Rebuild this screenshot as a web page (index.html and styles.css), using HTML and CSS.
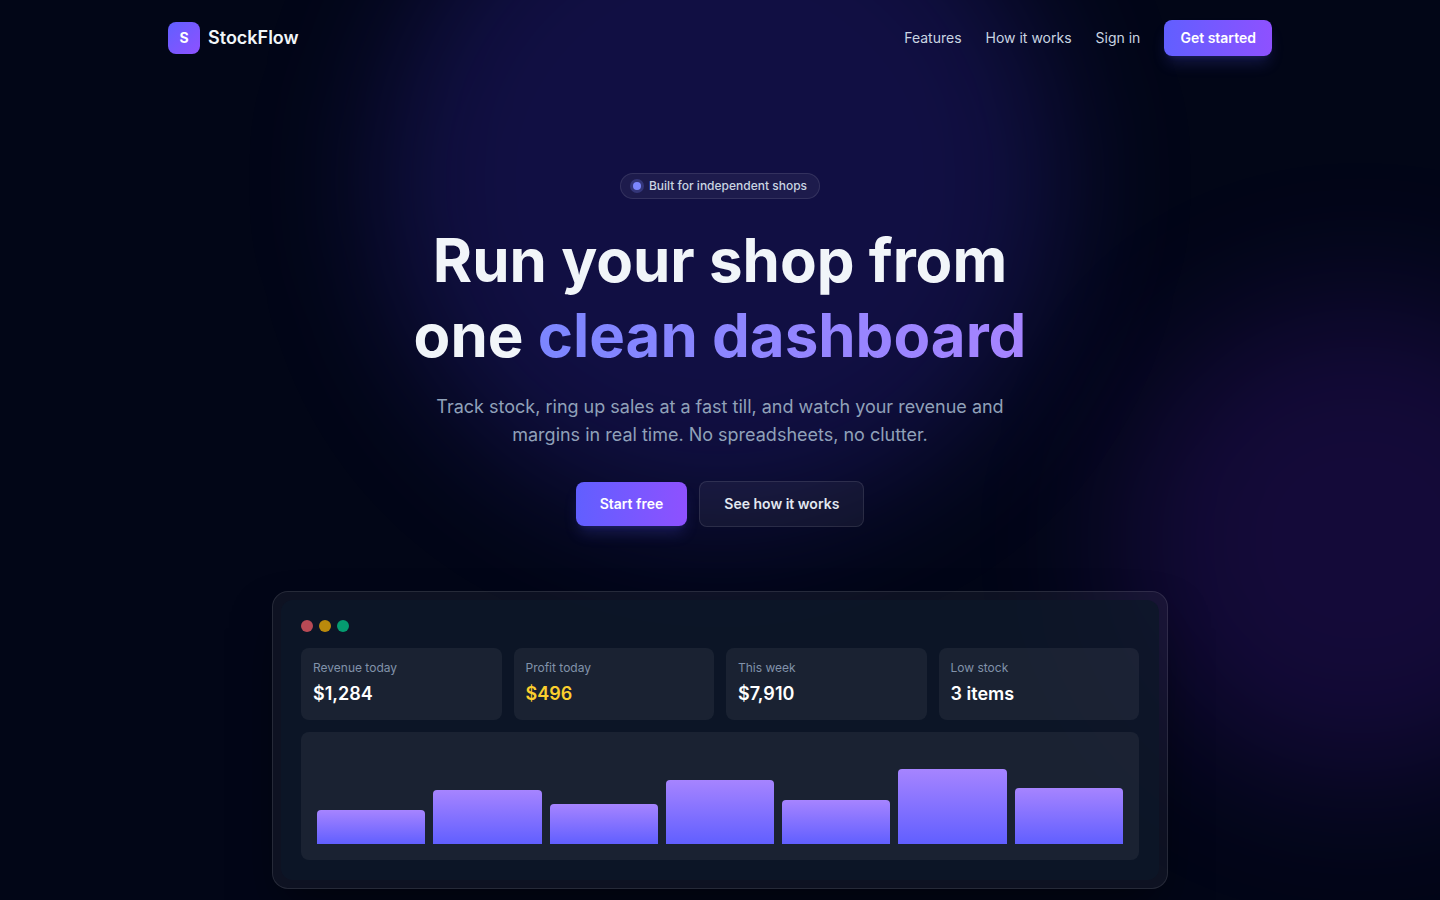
FILE: index.html
```html
<!DOCTYPE html>
<html lang="en">

<head>
    <meta charset="UTF-8">
    <meta name="viewport" content="width=device-width, initial-scale=1.0">
    <title>StockFlow</title>
    <link rel="stylesheet" href="styles.css">
</head>

<body>
    <div class="page">
        <div class="glow glow-indigo"></div>
        <div class="glow glow-violet"></div>

        <header class="header">
            <a class="brand" href="#">
                <span class="brand-mark">S</span>
                <span>StockFlow</span>
            </a>
            <nav class="nav">
                <a href="#features">Features</a>
                <a href="#how">How it works</a>
                <a href="#signin">Sign in</a>
                <a class="btn btn-primary btn-small" href="#start">Get started</a>
            </nav>
        </header>

        <main class="hero">
            <span class="badge"><span class="badge-dot"></span>Built for independent shops</span>
            <h1>Run your shop from<br>one <span class="gradient-text">clean dashboard</span></h1>
            <p class="lead">Track stock, ring up sales at a fast till, and watch your revenue and margins in real time. No spreadsheets, no clutter.</p>
            <div class="actions">
                <a class="btn btn-primary" href="#start">Start free</a>
                <a class="btn btn-outline" href="#how">See how it works</a>
            </div>

            <!-- Dashboard preview -->
            <div class="preview">
                <div class="preview-inner">
                    <div class="dots">
                        <span class="dot dot-red"></span>
                        <span class="dot dot-amber"></span>
                        <span class="dot dot-green"></span>
                    </div>
                    <div class="stats">
                        <div class="stat">
                            <div class="stat-label">Revenue today</div>
                            <div class="stat-value">$1,284</div>
                        </div>
                        <div class="stat">
                            <div class="stat-label">Profit today</div>
                            <div class="stat-value profit">$496</div>
                        </div>
                        <div class="stat">
                            <div class="stat-label">This week</div>
                            <div class="stat-value">$7,910</div>
                        </div>
                        <div class="stat">
                            <div class="stat-label">Low stock</div>
                            <div class="stat-value">3 items</div>
                        </div>
                    </div>
                    <div class="chart">
                        <div class="bar" style="height: 35%"></div>
                        <div class="bar" style="height: 56%"></div>
                        <div class="bar" style="height: 42%"></div>
                        <div class="bar" style="height: 67%"></div>
                        <div class="bar" style="height: 46%"></div>
                        <div class="bar" style="height: 78%"></div>
                        <div class="bar" style="height: 58%"></div>
                    </div>
                </div>
            </div>
        </main>
    </div>
</body>

</html>
```
FILE: styles.css
```css
* {
    box-sizing: border-box;
}

body {
    margin: 0;
    font-family: Inter, sans-serif;
    font-size: 14px;
    line-height: 20px;
    background-color: #020617;
    color: #f1f5f9;
}

a {
    color: inherit;
    text-decoration: none;
}

.page {
    position: relative;
    min-height: 100vh;
    overflow: hidden;
}

/* Background glows */
.glow {
    position: absolute;
    border-radius: 50%;
}

.glow-indigo {
    top: -160px;
    left: 50%;
    width: 680px;
    height: 680px;
    transform: translateX(-50%);
    background-color: rgba(79, 57, 246, 0.2);
    filter: blur(64px);
}

.glow-violet {
    top: 300px;
    right: -160px;
    width: 480px;
    height: 480px;
    background-color: rgba(127, 34, 254, 0.15);
    filter: blur(72px);
}

/* Header */
.header {
    position: relative;
    display: flex;
    align-items: center;
    justify-content: space-between;
    max-width: 1152px;
    margin: 0 auto;
    padding: 20px 24px;
}

.brand {
    display: flex;
    align-items: center;
    gap: 8px;
    font-size: 18px;
    font-weight: 600;
    line-height: 28px;
}

.brand-mark {
    display: grid;
    place-items: center;
    width: 32px;
    height: 32px;
    border-radius: 8px;
    background: linear-gradient(135deg, #615fff, #8e51ff);
    color: white;
    font-size: 14px;
    font-weight: 700;
}

.nav {
    display: flex;
    align-items: center;
    gap: 24px;
    color: #cad5e2;
}

/* Buttons */
.btn {
    padding: 12px 24px;
    border-radius: 8px;
    font-weight: 600;
}

.btn-primary {
    background: linear-gradient(to right, #615fff, #8e51ff);
    color: white;
    box-shadow: 0 10px 15px -3px rgba(97, 95, 255, 0.2), 0 4px 6px -4px rgba(97, 95, 255, 0.2);
}

.btn-small {
    padding: 8px 16px;
}

.btn-outline {
    border: 1px solid rgba(255, 255, 255, 0.1);
    background-color: rgba(255, 255, 255, 0.05);
    color: #e2e8f0;
}

/* Hero */
.hero {
    position: relative;
    display: flex;
    flex-direction: column;
    align-items: center;
    padding: 97px 24px 8px;
    text-align: center;
}

.badge {
    display: flex;
    align-items: center;
    gap: 8px;
    padding: 4px 12px;
    border: 1px solid rgba(255, 255, 255, 0.1);
    border-radius: 13px;
    background-color: rgba(255, 255, 255, 0.05);
    color: #cad5e2;
    font-size: 12px;
    font-weight: 500;
    line-height: 16px;
}

.badge-dot {
    width: 8px;
    height: 8px;
    border-radius: 50%;
    background-color: #7c86ff;
    box-shadow: 0 0 0 3px rgba(124, 134, 255, 0.25);
}

h1 {
    margin: 24px 0 0;
    font-size: 60px;
    font-weight: 700;
    line-height: 75px;
}

.gradient-text {
    background: linear-gradient(to right, #7c86ff, #a684ff);
    -webkit-background-clip: text;
    background-clip: text;
    color: transparent;
}

.lead {
    max-width: 576px;
    margin: 20px 0 0;
    color: #90a1b9;
    font-size: 18px;
    line-height: 28px;
}

.actions {
    display: flex;
    align-items: center;
    gap: 12px;
    margin-top: 32px;
}

/* Dashboard preview */
.preview {
    width: 100%;
    max-width: 896px;
    margin-top: 64px;
    padding: 8px;
    border: 1px solid rgba(255, 255, 255, 0.1);
    border-radius: 16px;
    background-color: rgba(255, 255, 255, 0.05);
    box-shadow: 0 25px 50px -12px rgba(0, 0, 0, 0.5);
    text-align: left;
}

.preview-inner {
    padding: 20px;
    border-radius: 12px;
    background-color: rgba(13, 23, 40, 0.8);
}

.dots {
    display: flex;
    gap: 6px;
    margin-bottom: 16px;
}

.dot {
    width: 12px;
    height: 12px;
    border-radius: 50%;
}

.dot-red {
    background-color: #b84a55;
}

.dot-amber {
    background-color: #ba8a0c;
}

.dot-green {
    background-color: #059c70;
}

.stats {
    display: grid;
    grid-template-columns: repeat(4, 1fr);
    gap: 12px;
}

.stat {
    padding: 12px;
    border-radius: 8px;
    background-color: rgba(255, 255, 255, 0.06);
}

.stat-label {
    color: #8192aa;
    font-size: 12px;
    line-height: 16px;
}

.stat-value {
    margin-top: 4px;
    color: white;
    font-size: 18px;
    font-weight: 600;
    line-height: 28px;
}

.profit {
    color: #fccf2e;
}

.chart {
    display: flex;
    align-items: flex-end;
    gap: 8px;
    height: 128px;
    margin-top: 12px;
    padding: 16px;
    border-radius: 8px;
    background-color: rgba(255, 255, 255, 0.06);
}

.bar {
    flex: 1;
    border-radius: 4px 4px 0 0;
    background: linear-gradient(to top, #615fff, #a684ff);
}
```
